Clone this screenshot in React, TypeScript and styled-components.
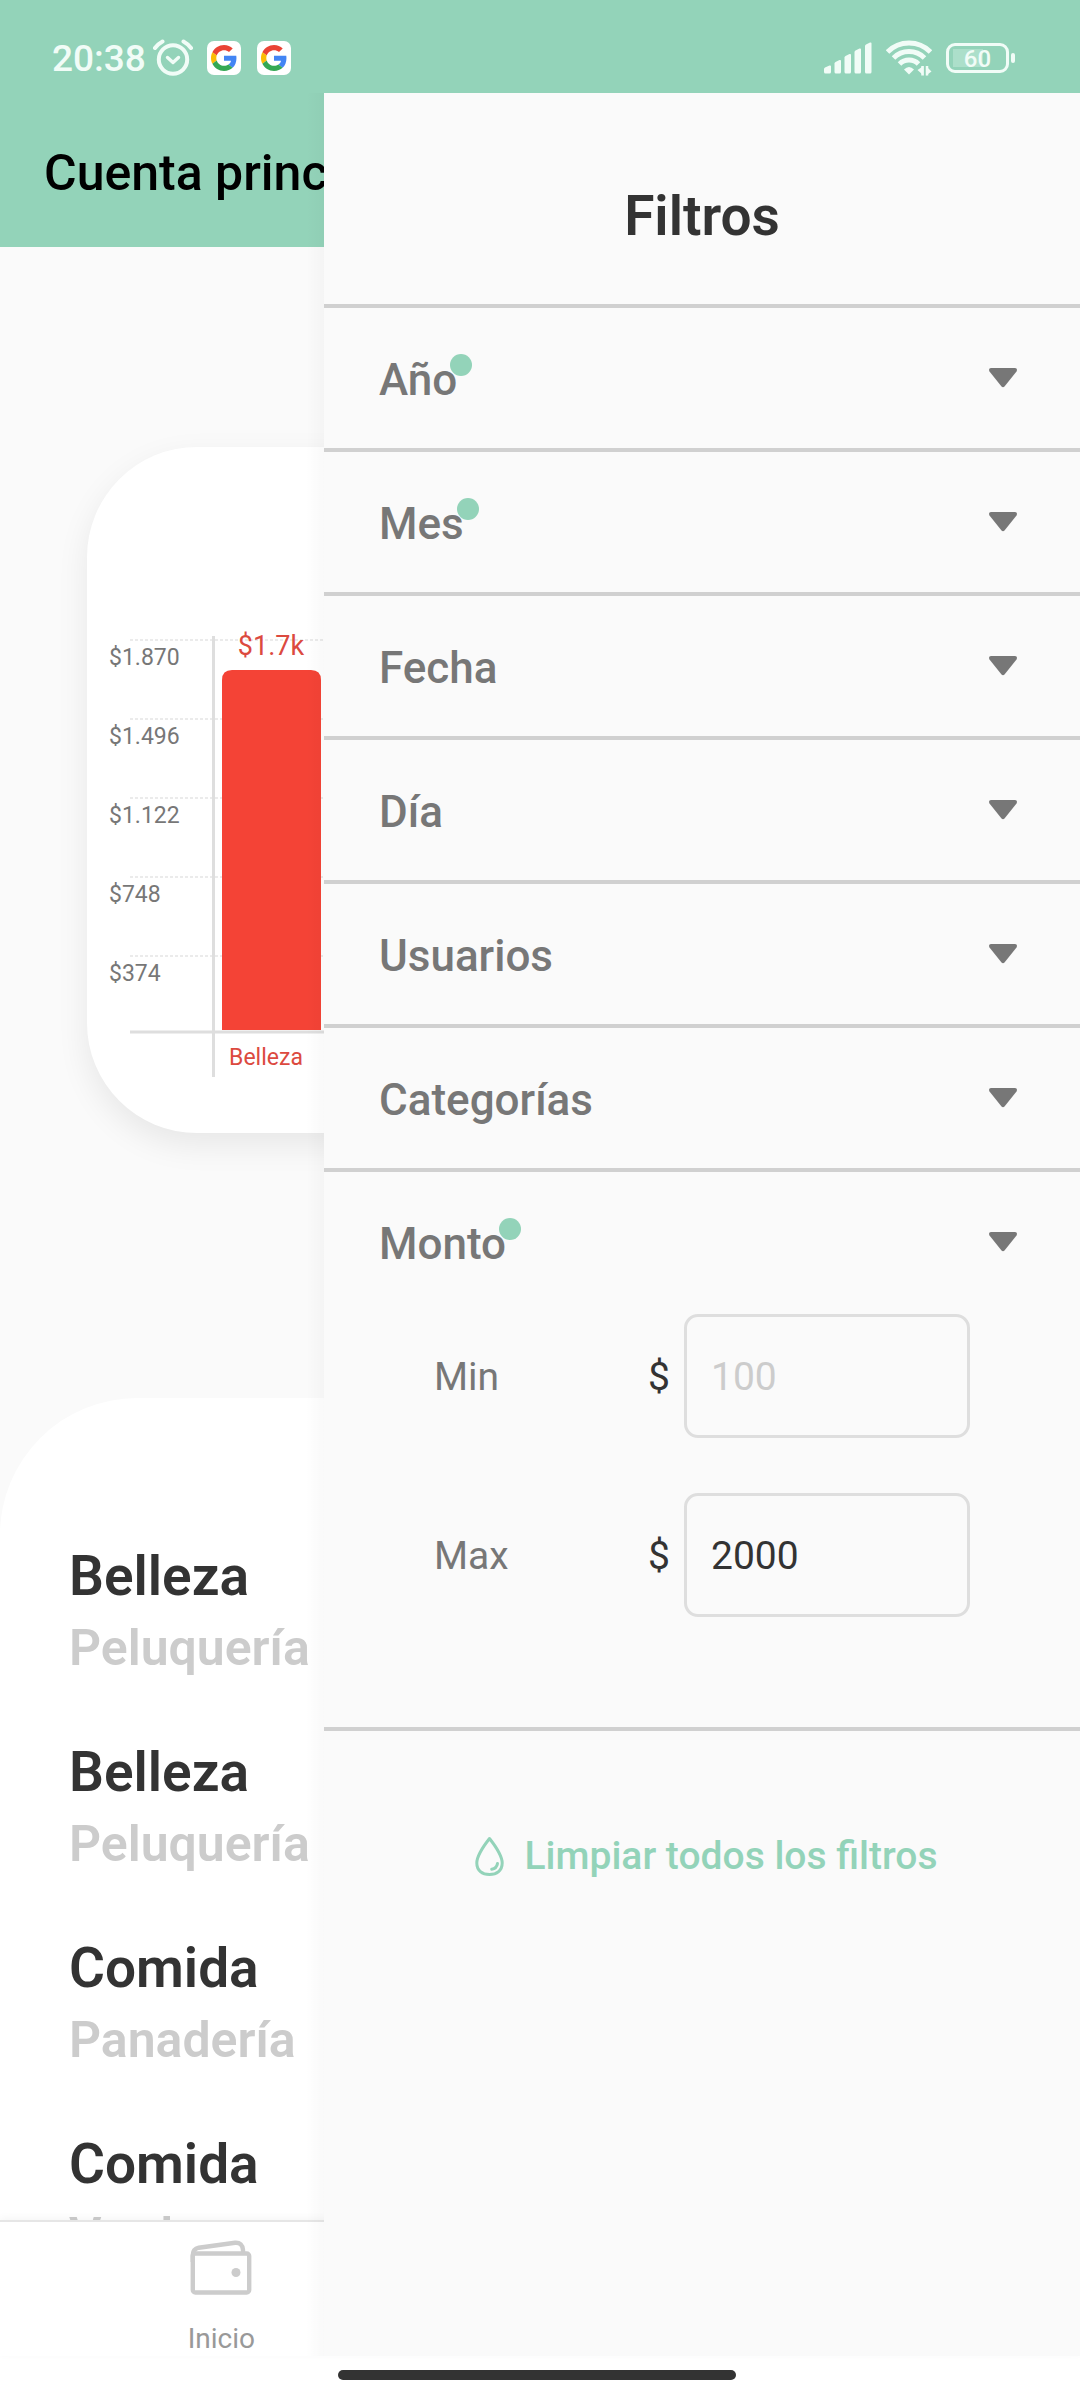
import React, { useState } from "react";
import styled, { createGlobalStyle } from "styled-components";

const color = {
  mint: "#93d3b9",
  surface: "#fafafa",
  white: "#ffffff",
  ink: "#333333",
  muted: "#777777",
  faint: "#cccccc",
  divider: "#d0d0d0",
  status: "#f1fcf7",
};

const GlobalStyle = createGlobalStyle`
  *, *::before, *::after { box-sizing: border-box; }
  body {
    margin: 0;
    background: ${color.white};
    color: ${color.ink};
    font-family: Roboto, "Noto Sans", sans-serif;
  }
  h1, h2, h3, p, ul { margin: 0; padding: 0; }
  button, input { font-family: inherit; }
`;

const Screen = styled.div`
  display: flex;
  flex-direction: column;
  height: 100vh;
  overflow: hidden;
`;

const StatusBar = styled.header`
  display: flex;
  align-items: center;
  justify-content: space-between;
  height: 93px;
  padding: 22px 65px 0 52px;
  background: ${color.mint};
  color: ${color.status};
`;

const StatusGroup = styled.div<{ $gap: number }>`
  display: flex;
  align-items: center;
  gap: ${(p) => p.$gap}px;
`;

const ClockGroup = styled.div`
  display: flex;
  align-items: center;
  gap: 7px;
  margin-right: -2px;
`;

const Clock = styled.time`
  padding-top: 2px;
  font-size: 37px;
  line-height: 44px;
  font-weight: 500;
`;

const Stage = styled.div`
  position: relative;
  display: flex;
  flex: 1;
  flex-direction: column;
  min-height: 0;
  background: ${color.surface};
`;

const TitleBar = styled.div`
  flex: none;
  padding: 50px 44px 44px;
  background: ${color.mint};
`;

const PageTitle = styled.h1`
  color: #000000;
  font-size: 50px;
  line-height: 60px;
  font-weight: 500;
  white-space: nowrap;
`;

const Content = styled.main`
  flex: 1;
  min-height: 0;
  overflow: hidden;
`;

const ChartCard = styled.section`
  margin: 200px 87px 0;
  padding: 180px 0 46px 20px;
  border-radius: 110px;
  background: ${color.white};
  box-shadow: 0 12px 32px rgba(0, 0, 0, 0.08);
`;

const ChartSvg = styled.svg`
  display: block;
  width: 100%;
  height: 460px;
  font-family: inherit;
`;

const AxisLabel = styled.text`
  fill: ${color.muted};
  font-size: 23px;
`;

const ValueLabel = styled.text`
  fill: #dc4a3f;
  font-size: 27px;
  text-anchor: middle;
`;

const BarLabel = styled.text`
  fill: #dc4a3f;
  font-size: 23px;
  text-anchor: middle;
`;

const Movements = styled.section`
  margin-top: 265px;
  padding: 141px 69px 0;
  border-radius: 137px 137px 0 0;
  background: ${color.white};
`;

const MovementList = styled.ul`
  display: flex;
  flex-direction: column;
  gap: 52px;
  list-style: none;
`;

const MovementName = styled.h3`
  font-size: 55px;
  line-height: 74px;
  font-weight: 600;
`;

const MovementDetail = styled.p`
  color: ${color.faint};
  font-size: 50px;
  line-height: 70px;
  font-weight: 600;
`;

const TabBar = styled.nav`
  display: flex;
  flex: none;
  height: 136px;
  padding: 0 62px;
  border-top: 2px solid #e6e6e6;
  background: ${color.white};
  box-shadow: 0 -2px 8px rgba(0, 0, 0, 0.04);
`;

const Tab = styled.a`
  display: flex;
  flex: 0 0 33.33%;
  flex-direction: column;
  align-items: center;
  justify-content: space-between;
  padding-top: 18px;
  color: #999999;
  font-size: 28px;
  line-height: 34px;
  text-decoration: none;
`;

const Drawer = styled.aside`
  position: absolute;
  inset: 0 0 0 30%;
  overflow: hidden auto;
  background: ${color.surface};
`;

const DrawerShade = styled.div`
  position: absolute;
  inset: 0 70% 0 0;
  background: linear-gradient(to left, rgba(0, 0, 0, 0.025), transparent 18px);
  pointer-events: none;
`;

const DrawerTitle = styled.h2`
  padding: 90px 0 55px;
  font-size: 55px;
  line-height: 66px;
  font-weight: 600;
  text-align: center;
`;

const FilterSection = styled.section`
  border-top: 4px solid ${color.divider};
`;

const FilterButton = styled.button`
  display: flex;
  align-items: center;
  justify-content: space-between;
  width: 100%;
  height: 140px;
  padding: 0 63px 0 55px;
  border: 0;
  background: transparent;
  color: ${color.muted};
  font-size: 44px;
  line-height: 52px;
  font-weight: 500;
  text-align: left;
`;

const FilterName = styled.span`
  position: relative;
  padding-top: 4px;
`;

const ActiveDot = styled.i`
  position: absolute;
  top: 4px;
  right: -15px;
  width: 22px;
  height: 22px;
  border-radius: 50%;
  background: ${color.mint};
`;

const AmountFields = styled.div`
  display: flex;
  flex-direction: column;
  gap: 55px;
  padding: 2px 110px 110px;
`;

const AmountRow = styled.div`
  display: flex;
  align-items: center;
  font-size: 39px;
  line-height: 48px;
`;

const AmountLabel = styled.label`
  flex: 1;
  padding-top: 2px;
  color: ${color.muted};
`;

const Currency = styled.span`
  margin-right: 14px;
  padding-top: 2px;
`;

const AmountInput = styled.input`
  width: 286px;
  height: 124px;
  padding: 2px 24px 0;
  border: 3px solid #dedede;
  border-radius: 14px;
  outline: 0;
  background: transparent;
  color: ${color.ink};
  font-size: 39px;

  &::placeholder {
    color: ${color.faint};
    opacity: 1;
  }
`;

const ClearArea = styled.div`
  display: flex;
  justify-content: center;
  padding: 98px 0;
  border-top: 4px solid ${color.divider};
`;

const ClearButton = styled.button`
  display: flex;
  align-items: center;
  gap: 13px;
  padding: 0;
  border: 0;
  background: transparent;
  color: ${color.mint};
  font-size: 39px;
  line-height: 54px;
  font-weight: 500;
`;

const GestureArea = styled.footer`
  flex: none;
  height: 44px;
  padding: 14px 6px 0 0;
  background: ${color.white};
`;

const GesturePill = styled.div`
  width: 37%;
  height: 10px;
  margin: 0 auto;
  border-radius: 5px;
  background: ${color.ink};
`;

const AlarmIcon = () => (
  <svg width="40" height="38" viewBox="0 0 40 38" fill="none" stroke="currentColor" strokeLinecap="round">
    <circle cx="20" cy="20.5" r="14.2" strokeWidth="4" />
    <path d="M14.5 18.5l5.5 5 5.5-5" strokeWidth="3.4" strokeLinejoin="round" />
    <path d="M2 9Q5 5 9.5 2.5M38 9Q35 5 30.5 2.5" strokeWidth="4" />
  </svg>
);

const GoogleIcon = () => (
  <svg width="34" height="34" viewBox="0 0 34 34">
    <rect width="34" height="34" rx="7" fill="#fff" />
    <g transform="translate(4 4) scale(.542)">
      <path fill="#EA4335" d="M24 9.500c3.540 0 6.710 1.220 9.210 3.600l6.850-6.850C35.900 2.380 30.470 0 24 0 14.620 0 6.510 5.380 2.560 13.220l7.980 6.190C12.430 13.720 17.740 9.500 24 9.500z" />
      <path fill="#4285F4" d="M46.980 24.550c0-1.570-.15-3.090-.38-4.550H24v9.020h12.940c-.58 2.960-2.260 5.480-4.780 7.180l7.730 6c4.510-4.180 7.090-10.360 7.090-17.650z" />
      <path fill="#FBBC05" d="M10.530 28.590c-.48-1.450-.76-2.990-.76-4.590s.27-3.140.76-4.590l-7.980-6.190C.92 16.460 0 20.120 0 24c0 3.880.92 7.540 2.560 10.780l7.970-6.190z" />
      <path fill="#34A853" d="M24 48c6.480 0 11.930-2.130 15.890-5.810l-7.730-6c-2.150 1.450-4.920 2.300-8.160 2.300-6.260 0-11.570-4.220-13.470-9.910l-7.980 6.190C6.510 42.620 14.620 48 24 48z" />
    </g>
  </svg>
);

const SignalIcon = () => (
  <svg width="48" height="32" viewBox="0 0 48 32" fill="currentColor">
    <path d="M0 27q0-1 1-1.500l4.500-2Q7 23 7 24.500V30q0 1.500-1.500 1.500h-4Q0 31.500 0 30z" />
    <path d="M10.500 21.500q0-1 1-1.500l4-2q1.500-.5 1.500 1V30q0 1.500-1.500 1.500H12q-1.500 0-1.500-1.500z" />
    <path d="M20.500 15.500q0-1 1-1.500l4-2q1.500-.5 1.500 1v17q0 1.500-1.500 1.500H22q-1.500 0-1.500-1.500z" />
    <path d="M30.500 10q0-1 1-1.500l4-2Q37 6 37 7.500V30q0 1.500-1.500 1.500H32q-1.500 0-1.500-1.500z" />
    <path d="M41 4q0-1 1-1.500l4-2q1.500-.5 1.500 1V30q0 1.500-1.500 1.500h-3.500Q41 31.500 41 30z" />
  </svg>
);

const WifiIcon = () => (
  <svg width="46" height="36" viewBox="0 0 46 36" fill="none" stroke="currentColor">
    <path d="M1.500 12a30 30 0 0 1 43 0M7.500 18a22 22 0 0 1 31 0M13.500 24a13.500 13.500 0 0 1 19 0" strokeWidth="5" />
    <path d="M18 29.500q5-5 10 0L23 34.500z" fill="currentColor" stroke="none" />
    <path d="M37.500 26v9.500L31.500 30zM40 35.500V26l5.500 5.500z" fill="currentColor" stroke="none" />
    <path d="M36.500 26v9.500M41 35.500V26" strokeWidth="2.5" />
  </svg>
);

const BatteryShell = styled.div`
  display: flex;
  align-items: center;
  gap: 2px;

  &::after {
    content: "";
    width: 4px;
    height: 10px;
    border-radius: 2px;
    background: currentColor;
  }
`;

const BatteryBody = styled.div`
  display: flex;
  align-items: center;
  justify-content: center;
  width: 63px;
  height: 30px;
  padding-top: 2px;
  border: 3px solid currentColor;
  border-radius: 9px;
  background: linear-gradient(to right, #acdfca, #acdfca) 4px 3px / 30px 18px no-repeat;
  font-size: 24px;
  line-height: 24px;
  font-weight: 500;
`;

const WalletIcon = () => (
  <svg width="62" height="56" viewBox="0 0 62 56" fill="none" stroke="#cccccc" strokeWidth="4.4">
    <rect x="2.8" y="13.5" width="56.4" height="39" rx="2.5" />
    <path d="M2.800 22v-7q0-6 6-7.300L45 2.800q7.500-.6 8 7.200v3" />
    <circle cx="46" cy="32.500" r="4.500" fill="#cccccc" stroke="none" />
  </svg>
);

const DropIcon = () => (
  <svg width="45" height="45" viewBox="0 0 45 45" fill="none" stroke="currentColor" strokeWidth="3">
    <path d="M22.500 4.500C19 9 9.800 20.500 9.800 29c0 7.500 5.400 11.500 12.700 11.500S35.200 36.500 35.200 29C35.200 20.500 26 9 22.500 4.500z" strokeLinejoin="round" />
    <path d="M30.500 29.500q-.8 5-5.800 5.800" strokeLinecap="round" />
  </svg>
);

const CaretIcon = () => (
  <svg width="28" height="20" viewBox="0 0 28 20" fill="currentColor">
    <path d="M2 0h24q3 .5 1.500 3.500L15.500 18.500q-1.500 1.500-3 0L.5 3.500Q-1 .5 2 0z" />
  </svg>
);

const ticks = ["$1.870", "$1.496", "$1.122", "$748", "$374"];
const TICK_GAP = 79;
const GRID_TOP = 13;
const AXIS_Y = 405;

const CategoryChart = () => (
  <ChartSvg role="img" aria-label="Gastos por categoría">
    {ticks.map((label, i) => {
      const y = GRID_TOP + i * TICK_GAP;
      return (
        <g key={label}>
          <line x1="23" x2="100%" y1={y} y2={y} stroke="#ebebeb" strokeWidth="2" strokeDasharray="3 2" />
          <AxisLabel x="2" y={y + 25}>{label}</AxisLabel>
        </g>
      );
    })}
    <line x1="23" x2="100%" y1={AXIS_Y} y2={AXIS_Y} stroke="#dedede" strokeWidth="3" />
    <line x1="106.500" x2="106.500" y1="9" y2="450" stroke="#dedede" strokeWidth="3" />
    <path d="M115 403V53q0-10 10-10h79q10 0 10 10v350z" fill="#f44336" />
    <ValueLabel x="164" y="28">$1.7k</ValueLabel>
    <BarLabel x="159" y="438">Belleza</BarLabel>
  </ChartSvg>
);

const movements = [
  { name: "Belleza", detail: "Peluquería" },
  { name: "Belleza", detail: "Peluquería" },
  { name: "Comida", detail: "Panadería" },
  { name: "Comida", detail: "Verdura" },
];

const filters = [
  { name: "Año", active: true },
  { name: "Mes", active: true },
  { name: "Fecha", active: false },
  { name: "Día", active: false },
  { name: "Usuarios", active: false },
  { name: "Categorías", active: false },
];

const FilterHeader = ({ name, active, open }: { name: string; active: boolean; open: boolean }) => (
  <FilterButton type="button" aria-expanded={open}>
    <FilterName>
      {name}
      {active && <ActiveDot />}
    </FilterName>
    <CaretIcon />
  </FilterButton>
);

export default function App() {
  const [min, setMin] = useState("");
  const [max, setMax] = useState("2000");

  return (
    <Screen>
      <GlobalStyle />
      <StatusBar>
        <StatusGroup $gap={16}>
          <ClockGroup>
            <Clock>20:38</Clock>
            <AlarmIcon />
          </ClockGroup>
          <GoogleIcon />
          <GoogleIcon />
        </StatusGroup>
        <StatusGroup $gap={14}>
          <SignalIcon />
          <WifiIcon />
          <BatteryShell>
            <BatteryBody>60</BatteryBody>
          </BatteryShell>
        </StatusGroup>
      </StatusBar>

      <Stage>
        <TitleBar>
          <PageTitle>Cuenta principal</PageTitle>
        </TitleBar>
        <Content>
          <ChartCard>
            <CategoryChart />
          </ChartCard>
          <Movements>
            <MovementList>
              {movements.map((m, i) => (
                <li key={i}>
                  <MovementName>{m.name}</MovementName>
                  <MovementDetail>{m.detail}</MovementDetail>
                </li>
              ))}
            </MovementList>
          </Movements>
        </Content>
        <TabBar>
          <Tab href="#inicio">
            <WalletIcon />
            Inicio
          </Tab>
        </TabBar>

        <DrawerShade />
        <Drawer aria-label="Filtros">
          <DrawerTitle>Filtros</DrawerTitle>
          {filters.map((f) => (
            <FilterSection key={f.name}>
              <FilterHeader name={f.name} active={f.active} open={false} />
            </FilterSection>
          ))}
          <FilterSection>
            <FilterHeader name="Monto" active open />
            <AmountFields>
              <AmountRow>
                <AmountLabel htmlFor="min">Min</AmountLabel>
                <Currency>$</Currency>
                <AmountInput id="min" inputMode="numeric" placeholder="100" value={min} onChange={(e) => setMin(e.target.value)} />
              </AmountRow>
              <AmountRow>
                <AmountLabel htmlFor="max">Max</AmountLabel>
                <Currency>$</Currency>
                <AmountInput id="max" inputMode="numeric" value={max} onChange={(e) => setMax(e.target.value)} />
              </AmountRow>
            </AmountFields>
          </FilterSection>
          <ClearArea>
            <ClearButton type="button">
              <DropIcon />
              Limpiar todos los filtros
            </ClearButton>
          </ClearArea>
        </Drawer>
      </Stage>

      <GestureArea>
        <GesturePill />
      </GestureArea>
    </Screen>
  );
}
